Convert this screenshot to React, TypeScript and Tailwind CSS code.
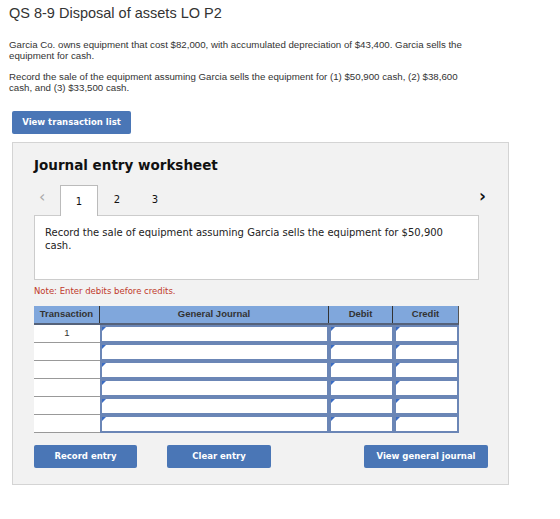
const rows = [1, 2, 3, 4, 5, 6];

const InputCell = ({ w }: { w: string }) => (
  <div className={`relative ${w} h-full border-2 border-[#6b86b6] bg-white`}>
    <div className="absolute left-0 top-0 w-0 h-0 border-t-[4px] border-t-[#3a6cc4] border-r-[4px] border-r-transparent" />
  </div>
);

const App = () => {
  return (
    <div className="w-[560px] h-[519px] bg-white text-[#333] font-['Liberation_Sans',Arial,sans-serif]">
      {/* Question */}
      <div className="px-[9px] pt-[4px]">
        <h1 className="text-[14.5px] leading-[18px] text-[#333]">QS 8-9 Disposal of assets LO P2</h1>
        <p className="mt-[17px] text-[9.7px] leading-[11px] w-[470px]">
          Garcia Co. owns equipment that cost $82,000, with accumulated depreciation of $43,400. Garcia sells the
          equipment for cash.
        </p>
        <p className="mt-[10px] text-[9.7px] leading-[11px] w-[470px]">
          Record the sale of the equipment assuming Garcia sells the equipment for (1) $50,900 cash, (2) $38,600
          cash, and (3) $33,500 cash.
        </p>
      </div>

      <button className="ml-[12px] mt-[18px] w-[119px] h-[23px] rounded-[2px] bg-[#4a76b6] text-white text-[8.5px] font-bold font-['DejaVu_Sans',Verdana,sans-serif] flex items-center justify-center">
        View transaction list
      </button>

      {/* Worksheet */}
      <div className="ml-[12px] mt-[8px] w-[497px] h-[343px] bg-[#f2f2f2] border border-[#d4d4d4] pl-[21px] font-['DejaVu_Sans',Verdana,sans-serif]">
        <h2 className="pt-[12px] text-[13.5px] leading-[20px] font-bold text-[#111]">Journal entry worksheet</h2>

        {/* Tabs */}
        <div className="mt-[9px] flex items-end h-[31px] w-[452px] relative">
          <span className="w-[26px] pl-[5px] self-center text-[#aaa] text-[16px] leading-none pb-[6px]">‹</span>
          <div className="w-[38px] h-[31px] bg-white border border-[#bbb] border-b-0 flex items-center justify-center text-[10px] text-[#111] relative z-10 -mb-px">
            1
          </div>
          <span className="w-[38px] h-[31px] flex items-center justify-center text-[10px] text-[#111]">2</span>
          <span className="w-[38px] h-[31px] flex items-center justify-center text-[10px] text-[#111]">3</span>
          <span className="ml-auto self-start mt-[4px] text-[17px] leading-none font-bold text-[#111]">›</span>
        </div>
        <div className="w-[445px] h-[65px] bg-white border border-[#ccc] pl-[10px] pr-[30px] pt-[10px] text-[10px] leading-[13px] text-[#222]">
          Record the sale of equipment assuming Garcia sells the equipment for $50,900 cash.
        </div>

        <p className="mt-[6px] text-[8.5px] leading-[10px] text-[#c0392b]">Note: Enter debits before credits.</p>

        {/* Table */}
        <div className="mt-[10px] w-[425px] font-['Liberation_Sans',Arial,sans-serif]">
          <div className="flex h-[19px] bg-[#80a7dc] border-b-2 border-[#55627a] border-r border-r-[#555] text-[9.5px] font-bold text-[#333]">
            <div className="w-[66px] flex items-center justify-center border-r border-[#333]">Transaction</div>
            <div className="w-[229px] flex items-center justify-center border-r border-[#333]">General Journal</div>
            <div className="w-[64px] flex items-center justify-center border-r border-[#333]">Debit</div>
            <div className="flex-1 flex items-center justify-center">Credit</div>
          </div>
          {rows.map((r) => (
            <div key={r} className="flex h-[18px]">
              <div className="w-[66px] h-full bg-white border-b border-[#999] flex items-center justify-center text-[9.5px] text-[#333]">
                {r === 1 ? "1" : ""}
              </div>
              <InputCell w="w-[229px]" />
              <InputCell w="w-[65px]" />
              <InputCell w="w-[65px]" />
            </div>
          ))}
        </div>

        {/* Actions */}
        <div className="mt-[12px] flex w-[454px] text-white text-[8.5px] font-bold">
          <button className="w-[103px] h-[23px] rounded-[2px] bg-[#4a76b6]">Record entry</button>
          <button className="ml-[30px] w-[104px] h-[23px] rounded-[2px] bg-[#4a76b6]">Clear entry</button>
          <button className="ml-auto w-[124px] h-[23px] rounded-[2px] bg-[#4a76b6]">View general journal</button>
        </div>
      </div>
    </div>
  );
};

export default App;
